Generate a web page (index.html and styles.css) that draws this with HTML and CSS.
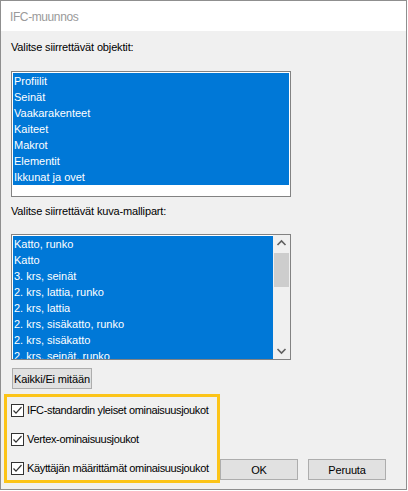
FILE: index.html
```html
<!DOCTYPE html>
<html>
<head>
<meta charset="utf-8">
<link rel="stylesheet" href="styles.css">
</head>
<body>
<div class="window">
  <div class="titlebar"><span class="title">IFC-muunnos</span></div>
  <div class="content">
    <div class="label label-first">Valitse siirrettävät objektit:</div>
    <div class="listbox">
      <div class="items">
        <div class="item sel">Profiilit</div>
        <div class="item sel">Seinät</div>
        <div class="item sel">Vaakarakenteet</div>
        <div class="item sel">Kaiteet</div>
        <div class="item sel">Makrot</div>
        <div class="item sel">Elementit</div>
        <div class="item sel">Ikkunat ja ovet</div>
      </div>
    </div>
    <div class="label label-second">Valitse siirrettävät kuva-mallipart:</div>
    <div class="listbox listbox-scroll">
      <div class="items items-clip">
        <div class="item sel">Katto, runko</div>
        <div class="item sel">Katto</div>
        <div class="item sel">3. krs, seinät</div>
        <div class="item sel">2. krs, lattia, runko</div>
        <div class="item sel">2. krs, lattia</div>
        <div class="item sel">2. krs, sisäkatto, runko</div>
        <div class="item sel">2. krs, sisäkatto</div>
        <div class="item sel">2. krs, seinät, runko</div>
      </div>
      <div class="scrollbar">
        <div class="arrow">
          <svg width="17" height="17" viewBox="0 0 17 17"><polyline points="4.5,10 8.5,6 12.5,10" fill="none" stroke="#606060" stroke-width="1.6"/></svg>
        </div>
        <div class="track"><div class="thumb"></div></div>
        <div class="arrow">
          <svg width="17" height="17" viewBox="0 0 17 17"><polyline points="4.5,7 8.5,11 12.5,7" fill="none" stroke="#606060" stroke-width="1.6"/></svg>
        </div>
      </div>
    </div>
    <button class="btn btn-all">Kaikki/Ei mitään</button>
    <div class="bottom">
      <div class="highlight">
        <label class="check"><span class="box"><svg width="11" height="11" viewBox="0 0 11 11"><polyline points="1.5,5.5 4,8.2 9.5,2" fill="none" stroke="#333" stroke-width="1.2"/></svg></span>IFC-standardin yleiset ominaisuusjoukot</label>
        <label class="check"><span class="box"><svg width="11" height="11" viewBox="0 0 11 11"><polyline points="1.5,5.5 4,8.2 9.5,2" fill="none" stroke="#333" stroke-width="1.2"/></svg></span>Vertex-ominaisuusjoukot</label>
        <label class="check"><span class="box"><svg width="11" height="11" viewBox="0 0 11 11"><polyline points="1.5,5.5 4,8.2 9.5,2" fill="none" stroke="#333" stroke-width="1.2"/></svg></span>Käyttäjän määrittämät ominaisuusjoukot</label>
      </div>
      <div class="buttons">
        <button class="btn btn-dlg">OK</button>
        <button class="btn btn-dlg">Peruuta</button>
      </div>
    </div>
  </div>
</div>
</body>
</html>
```

FILE: styles.css
```css
html, body {
  margin: 0;
  padding: 0;
  background: #ffffff;
}

body {
  font-family: "Liberation Sans", Arial, sans-serif;
  font-size: 11px;
  color: #000;
}

.window {
  width: 405px;
  height: 488px;
  border: 1px solid #8f8f8f;
  background: #f0f0f0;
  display: flex;
  flex-direction: column;
}

.titlebar {
  height: 30px;
  background: #ffffff;
  display: flex;
  align-items: center;
  padding-left: 9px;
  flex-shrink: 0;
}

.title {
  font-size: 12px;
  color: #9a9a9a;
  letter-spacing: -0.4px;
  margin-top: 1px;
}

.content {
  flex: 1;
  padding: 0 10px;
  display: flex;
  flex-direction: column;
  align-items: flex-start;
}

.label {
  height: 13px;
  line-height: 13px;
  letter-spacing: -0.15px;
}

.label-first {
  margin-top: 10px;
}

.label-second {
  margin-top: 8px;
}

.listbox {
  box-sizing: border-box;
  width: 280px;
  height: 126px;
  border: 1px solid #828282;
  background: #ffffff;
  margin-top: 17px;
  display: flex;
}

.label-second + .listbox {
  margin-top: 16px;
}

.items {
  flex: 1;
  padding: 1px;
}

.items-clip {
  overflow: hidden;
  padding: 1px 0 0 1px;
}

.item {
  height: 16px;
  line-height: 16px;
  padding-left: 1px;
  white-space: nowrap;
}

.item.sel {
  background: #0078d7;
  color: #ffffff;
}

.scrollbar {
  width: 17px;
  background: #f0f0f0;
  display: flex;
  flex-direction: column;
}

.arrow {
  height: 17px;
  flex-shrink: 0;
}

.arrow svg {
  display: block;
}

.track {
  flex: 1;
}

.thumb {
  margin: 1px 1px 0 1px;
  height: 34px;
  background: #cdcdcd;
}

.btn {
  font-family: "Liberation Sans", Arial, sans-serif;
  font-size: 11px;
  color: #000;
  background: #e1e1e1;
  border: 1px solid #adadad;
  padding: 0;
  box-sizing: border-box;
  height: 21px;
  letter-spacing: -0.15px;
}

.btn-all {
  margin-top: 8px;
  margin-left: 1px;
  width: 80px;
}

.bottom {
  display: flex;
  align-items: flex-end;
  width: 385px;
  margin-top: 5px;
  margin-left: -7px;
}

.highlight {
  box-sizing: border-box;
  width: 218px;
  height: 89px;
  border: 3px solid #fcc419;
  padding: 5px 0 0 4px;
  display: flex;
  flex-direction: column;
  gap: 13px;
}

.check {
  display: flex;
  align-items: center;
  height: 16px;
  white-space: nowrap;
  letter-spacing: -0.35px;
}

.box {
  box-sizing: border-box;
  width: 13px;
  height: 13px;
  border: 1px solid #333333;
  background: #ffffff;
  margin-right: 3px;
  display: flex;
  align-items: center;
  justify-content: center;
  flex-shrink: 0;
}

.box svg {
  display: block;
}

.buttons {
  margin-left: auto;
  display: flex;
  gap: 10px;
  margin-bottom: 3px;
  margin-right: 3px;
}

.btn-dlg {
  width: 78px;
}
```
